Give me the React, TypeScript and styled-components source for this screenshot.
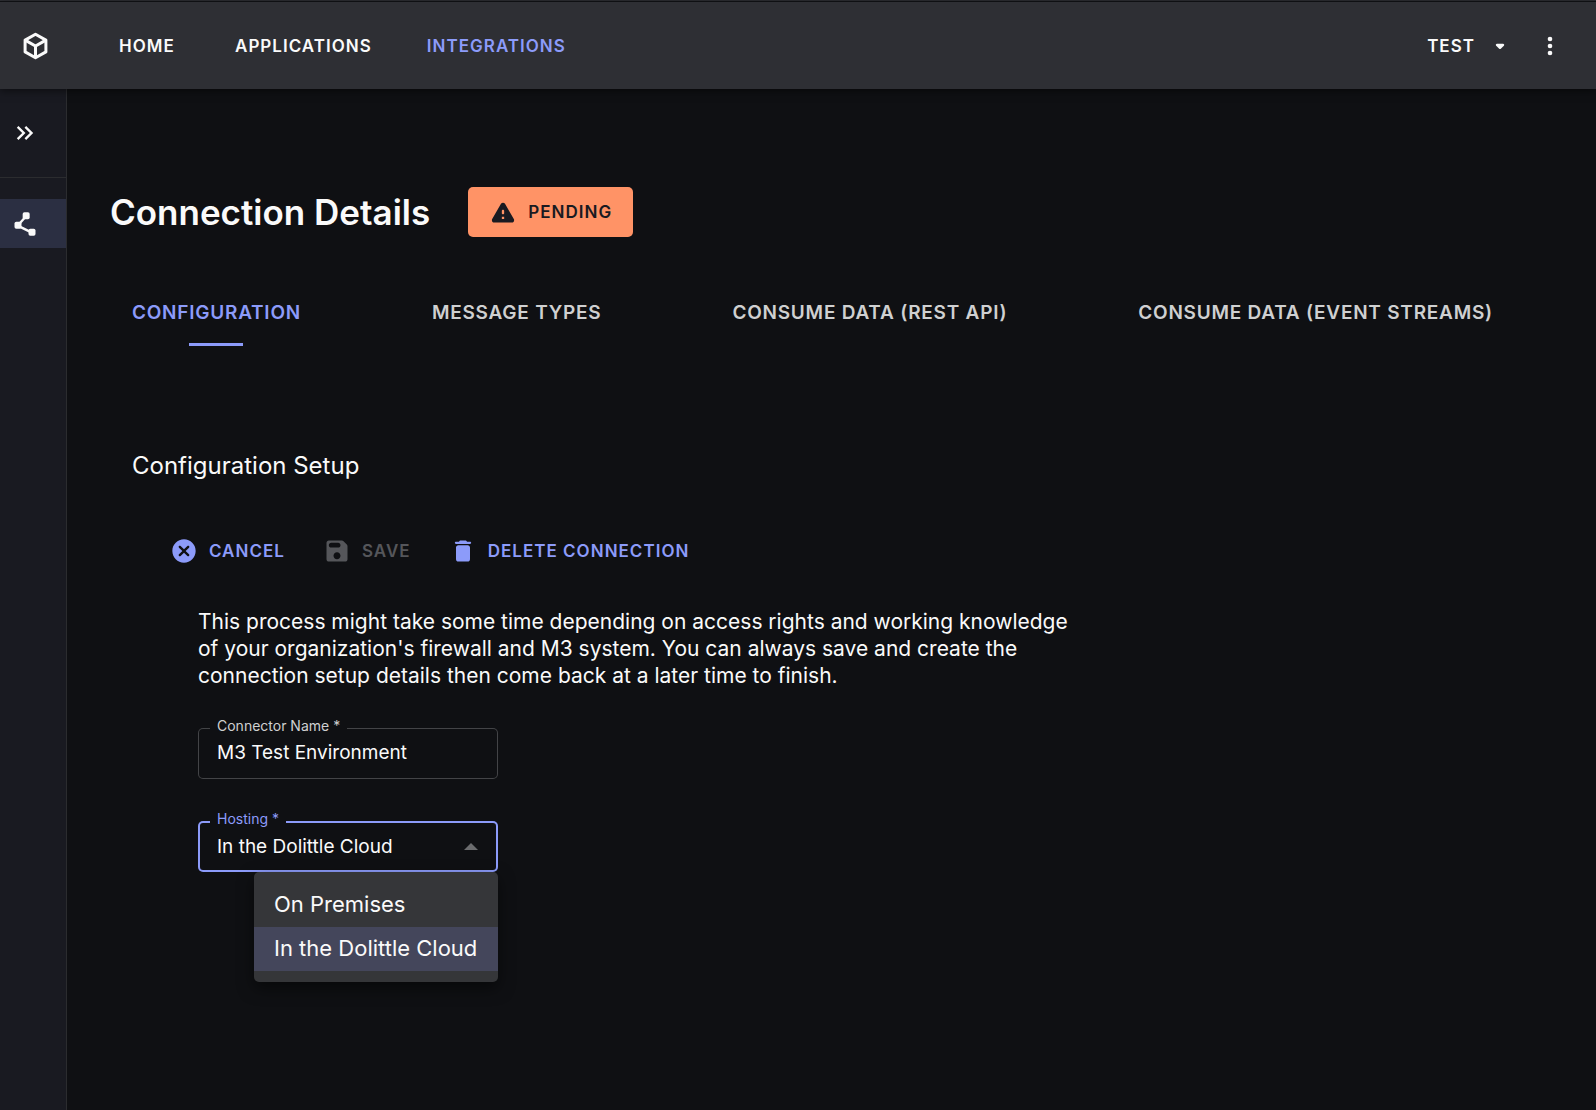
import React, { useState } from "react";
import styled, { createGlobalStyle, css } from "styled-components";

const color = {
  bg: "#0f1013",
  bar: "#2e2f34",
  rail: "#191a21",
  railActive: "#2b2f42",
  line: "#2b2c2f",
  primary: "#8c9bfa",
  warning: "#ff9366",
  text: "#fafafa",
  muted: "#cfd0d1",
  disabled: "#55565a",
  outline: "#434447",
  paper: "#353639",
  selected: "#44465b",
};

const GlobalStyle = createGlobalStyle`
  *, *::before, *::after { box-sizing: border-box; }
  body {
    margin: 0;
    background: ${color.bg};
    color: ${color.text};
    font-family: Inter, "Noto Sans", sans-serif;
  }
  button, input, select { font-family: inherit; color: inherit; }
`;

const Page = styled.div`
  display: flex;
  flex-direction: column;
  min-height: 100vh;
  border-top: 1px solid ${color.bar};
`;

const plainButton = css`
  display: inline-flex;
  align-items: center;
  border: 0;
  padding: 0;
  background: none;
  cursor: pointer;
`;

const capsText = css`
  font-size: 17px;
  font-weight: 600;
  letter-spacing: 0.06em;
  line-height: 28px;
  text-transform: uppercase;
  white-space: nowrap;
`;

const TopBar = styled.header`
  position: relative;
  display: flex;
  align-items: center;
  height: 88px;
  padding: 0 32px 0 23px;
  border-top: 1px solid ${color.bg};
  background: ${color.bar};
  box-shadow: 0 2px 8px rgba(0, 0, 0, 0.5);
`;

const LogoLink = styled.a`
  display: flex;
  color: ${color.text};
`;

const TopNav = styled.nav`
  display: flex;
  gap: 37px;
  flex: 1;
  margin-left: 57px;
`;

const NavLink = styled.a<{ $active?: boolean }>`
  ${capsText}
  min-width: 84px;
  padding: 0 9px;
  text-align: center;
  text-decoration: none;
  color: ${(p) => (p.$active ? color.primary : color.text)};
`;

const TopActions = styled.div`
  display: flex;
  align-items: center;
  gap: 22px;
`;

const TenantButton = styled.button`
  ${plainButton}
  ${capsText}
  gap: 11px;
`;

const IconButton = styled.button`
  ${plainButton}
`;

const Body = styled.div`
  display: flex;
  flex: 1;
`;

const Rail = styled.aside`
  flex: none;
  width: 67px;
  border-right: 1px solid ${color.line};
  background: ${color.rail};
`;

const RailToggle = styled.button`
  ${plainButton}
  width: 100%;
  height: 89px;
  padding-left: 11px;
  border-bottom: 1px solid ${color.line};
`;

const RailLink = styled.a`
  display: flex;
  align-items: center;
  height: 49px;
  margin-top: 21px;
  padding-left: 11px;
  background: ${color.railActive};
  color: ${color.text};
`;

const Main = styled.main`
  flex: 1;
  min-width: 0;
  padding: 98px 44px 44px 43px;
`;

const TitleRow = styled.div`
  display: flex;
  align-items: center;
  gap: 38px;
`;

const Title = styled.h1`
  margin: 0;
  font-size: 35px;
  font-weight: 600;
  line-height: 44px;
`;

const StatusBadge = styled.button`
  ${plainButton}
  ${capsText}
  gap: 11px;
  height: 50px;
  padding: 0 21px;
  border-radius: 5px;
  background: ${color.warning};
  color: #191a21;
`;

const Tabs = styled.div`
  display: flex;
  gap: 131px;
  margin: 42px 0 0 22px;
`;

const Tab = styled.button<{ $active?: boolean }>`
  ${plainButton}
  position: relative;
  height: 67px;
  font-size: 19px;
  font-weight: 600;
  letter-spacing: 0.04em;
  text-transform: uppercase;
  white-space: nowrap;
  color: ${(p) => (p.$active ? color.primary : color.muted)};

  &::after {
    content: "";
    position: absolute;
    bottom: 0;
    left: calc(50% - 27px);
    width: 54px;
    height: 3px;
    background: ${(p) => (p.$active ? color.primary : "transparent")};
  }
`;

const Section = styled.section`
  padding: 103px 0 0 22px;
`;

const SectionTitle = styled.h2`
  margin: 0;
  font-size: 24px;
  font-weight: 400;
  line-height: 34px;
`;

const ActionRow = styled.div`
  display: flex;
  gap: 22px;
  margin: 43px 0 0 30px;
`;

const ActionButton = styled.button`
  ${plainButton}
  ${capsText}
  gap: 11px;
  height: 50px;
  padding: 0 8px;
  color: ${color.primary};

  &:disabled {
    color: ${color.disabled};
    cursor: default;
  }
`;

const Form = styled.form`
  display: flex;
  flex-direction: column;
  align-items: flex-start;
  padding: 32px 0 0 66px;
`;

const Intro = styled.p`
  max-width: 890px;
  margin: 0 0 39px;
  font-size: 21px;
  line-height: 27px;
`;

const Field = styled.div<{ $focused?: boolean }>`
  position: relative;
  display: flex;
  align-items: center;
  width: 300px;
  height: 51px;
  margin-bottom: 42px;
  border-radius: 5px;
  box-shadow: inset 0 0 0 ${(p) => (p.$focused ? `2px ${color.primary}` : `1px ${color.outline}`)};
`;

const FieldLabel = styled.label<{ $focused?: boolean }>`
  position: absolute;
  top: -10px;
  left: 12px;
  padding: 0 7px;
  background: ${color.bg};
  font-size: 14px;
  line-height: 16px;
  color: ${(p) => (p.$focused ? color.primary : color.muted)};
`;

const controlStyle = css`
  width: 100%;
  height: 100%;
  padding: 0 19px;
  border: 0;
  outline: 0;
  background: none;
  font-size: 19px;
`;

const TextInput = styled.input`
  ${controlStyle}
  padding-bottom: 2px;
`;

const Select = styled.select`
  ${controlStyle}
  appearance: none;

  option { background: ${color.paper}; }
`;

const SelectArrow = styled.svg`
  position: absolute;
  right: 20px;
  color: #6b6c6e;
  pointer-events: none;
`;

const Menu = styled.ul`
  position: absolute;
  top: 100%;
  right: 0;
  width: 244px;
  margin: 0;
  padding: 11px 0;
  list-style: none;
  border-radius: 5px;
  background: ${color.paper};
  box-shadow: 0 6px 16px rgba(0, 0, 0, 0.5);
`;

const MenuOption = styled.button<{ $selected?: boolean }>`
  ${plainButton}
  width: 100%;
  height: 44px;
  padding: 0 20px 2px;
  font-size: 22px;
  white-space: nowrap;
  background: ${(p) => (p.$selected ? color.selected : "transparent")};
`;

type IconProps = { children: React.ReactNode };
const Icon = ({ children }: IconProps) => (
  <svg width="28" height="28" viewBox="0 0 24 24" fill="currentColor" aria-hidden="true">
    {children}
  </svg>
);

const CubeLogo = () => (
  <svg width="25" height="28" viewBox="0 0 25 28" fill="none" stroke="currentColor" strokeWidth="3" aria-hidden="true">
    <path d="M12.5 2.2 22.9 8.1V19.9L12.5 25.8 2.1 19.9V8.1Z" strokeLinejoin="round" />
    <path d="M2.1 8.1 12.5 14 22.9 8.1M12.5 14V25.8" />
  </svg>
);

const ChevronsIcon = () => (
  <Icon>
    <path d="M6.41 6 5 7.41 9.58 12 5 16.59 6.41 18l6-6z" />
    <path d="m13 6-1.41 1.41L16.17 12l-4.58 4.59L13 18l6-6z" />
  </Icon>
);

const PolylineIcon = () => (
  <Icon>
    <rect x="10" y="2" width="6" height="6" rx="1.5" />
    <rect x="3" y="10" width="6" height="6" rx="1.5" />
    <rect x="15" y="16" width="6" height="6" rx="1.5" />
    <path d="M12.3 6 7 12M7 14l10 5" fill="none" stroke="currentColor" strokeWidth="2" />
  </Icon>
);

const WarningIcon = () => (
  <Icon>
    <path d="M4.47 21h15.06c1.54 0 2.5-1.67 1.73-3L13.73 4.99c-.77-1.33-2.69-1.33-3.46 0L2.74 18c-.77 1.33.19 3 1.73 3zM12 14c-.55 0-1-.45-1-1v-2c0-.55.45-1 1-1s1 .45 1 1v2c0 .55-.45 1-1 1zm1 4h-2v-2h2v2z" />
  </Icon>
);

const CancelIcon = () => (
  <Icon>
    <path d="M12 2C6.47 2 2 6.47 2 12s4.47 10 10 10 10-4.47 10-10S17.53 2 12 2zm4.3 14.3c-.39.39-1.02.39-1.41 0L12 13.41 9.11 16.3c-.39.39-1.02.39-1.41 0a.9959.9959 0 0 1 0-1.41L10.59 12 7.7 9.11a.9959.9959 0 0 1 0-1.41c.39-.39 1.02-.39 1.41 0L12 10.59l2.89-2.89c.39-.39 1.02-.39 1.41 0 .39.39.39 1.02 0 1.41L13.41 12l2.89 2.89c.38.38.38 1.02 0 1.41z" />
  </Icon>
);

const SaveIcon = () => (
  <Icon>
    <path d="M17.59 3.59c-.38-.38-.89-.59-1.42-.59H5c-1.11 0-2 .9-2 2v14c0 1.1.9 2 2 2h14c1.1 0 2-.9 2-2V7.83c0-.53-.21-1.04-.59-1.41l-2.82-2.83zM12 19c-1.66 0-3-1.34-3-3s1.34-3 3-3 3 1.34 3 3-1.34 3-3 3zm1-10H7c-1.1 0-2-.9-2-2s.9-2 2-2h6c1.1 0 2 .9 2 2s-.9 2-2 2z" />
  </Icon>
);

const DeleteIcon = () => (
  <Icon>
    <path d="M6 19c0 1.1.9 2 2 2h8c1.1 0 2-.9 2-2V9c0-1.1-.9-2-2-2H8c-1.1 0-2 .9-2 2v10zM18 4h-2.5l-.71-.71c-.18-.18-.44-.29-.7-.29H9.91c-.26 0-.52.11-.7.29L8.5 4H6c-.55 0-1 .45-1 1s.45 1 1 1h12c.55 0 1-.45 1-1s-.45-1-1-1z" />
  </Icon>
);

const DropDownIcon = () => (
  <Icon>
    <path d="m8.71 11.71 2.59 2.59c.39.39 1.02.39 1.41 0l2.59-2.59c.63-.63.18-1.71-.71-1.71H9.41c-.89 0-1.33 1.08-.7 1.71z" />
  </Icon>
);

const MoreIcon = () => (
  <Icon>
    <circle cx="12" cy="6" r="2" />
    <circle cx="12" cy="12" r="2" />
    <circle cx="12" cy="18" r="2" />
  </Icon>
);

const navItems = ["Home", "Applications", "Integrations"];
const tabs = ["Configuration", "Message Types", "Consume Data (Rest API)", "Consume Data (Event Streams)"];
const hostingOptions = ["On Premises", "In the Dolittle Cloud"];

export default function App() {
  const [tab, setTab] = useState(tabs[0]);
  const [name, setName] = useState("M3 Test Environment");
  const [hosting, setHosting] = useState(hostingOptions[1]);

  return (
    <Page>
      <GlobalStyle />
      <TopBar>
        <LogoLink href="#" aria-label="Dolittle">
          <CubeLogo />
        </LogoLink>
        <TopNav>
          {navItems.map((item) => (
            <NavLink key={item} href="#" $active={item === "Integrations"}>
              {item}
            </NavLink>
          ))}
        </TopNav>
        <TopActions>
          <TenantButton type="button">
            Test
            <DropDownIcon />
          </TenantButton>
          <IconButton type="button" aria-label="More">
            <MoreIcon />
          </IconButton>
        </TopActions>
      </TopBar>
      <Body>
        <Rail>
          <RailToggle type="button" aria-label="Expand sidebar">
            <ChevronsIcon />
          </RailToggle>
          <RailLink href="#" aria-label="Connections">
            <PolylineIcon />
          </RailLink>
        </Rail>
        <Main>
          <TitleRow>
            <Title>Connection Details</Title>
            <StatusBadge type="button">
              <WarningIcon />
              Pending
            </StatusBadge>
          </TitleRow>
          <Tabs role="tablist">
            {tabs.map((label) => (
              <Tab
                key={label}
                type="button"
                role="tab"
                aria-selected={label === tab}
                $active={label === tab}
                onClick={() => setTab(label)}
              >
                {label}
              </Tab>
            ))}
          </Tabs>
          <Section>
            <SectionTitle>Configuration Setup</SectionTitle>
            <ActionRow>
              <ActionButton type="button">
                <CancelIcon />
                Cancel
              </ActionButton>
              <ActionButton type="button" disabled>
                <SaveIcon />
                Save
              </ActionButton>
              <ActionButton type="button">
                <DeleteIcon />
                Delete Connection
              </ActionButton>
            </ActionRow>
            <Form onSubmit={(e) => e.preventDefault()}>
              <Intro>
                This process might take some time depending on access rights and working knowledge of your
                organization's firewall and M3 system. You can always save and create the connection setup
                details then come back at a later time to finish.
              </Intro>
              <Field>
                <TextInput id="connector-name" value={name} onChange={(e) => setName(e.target.value)} />
                <FieldLabel htmlFor="connector-name">Connector Name *</FieldLabel>
              </Field>
              <Field $focused>
                <Select id="hosting" value={hosting} onChange={(e) => setHosting(e.target.value)}>
                  {hostingOptions.map((option) => (
                    <option key={option}>{option}</option>
                  ))}
                </Select>
                <FieldLabel htmlFor="hosting" $focused>
                  Hosting *
                </FieldLabel>
                <SelectArrow width="14" height="7" viewBox="0 0 14 7" fill="currentColor" aria-hidden="true">
                  <path d="M0 7 7 0l7 7z" />
                </SelectArrow>
                <Menu>
                  {hostingOptions.map((option) => (
                    <li key={option}>
                      <MenuOption type="button" $selected={option === hosting} onClick={() => setHosting(option)}>
                        {option}
                      </MenuOption>
                    </li>
                  ))}
                </Menu>
              </Field>
            </Form>
          </Section>
        </Main>
      </Body>
    </Page>
  );
}
